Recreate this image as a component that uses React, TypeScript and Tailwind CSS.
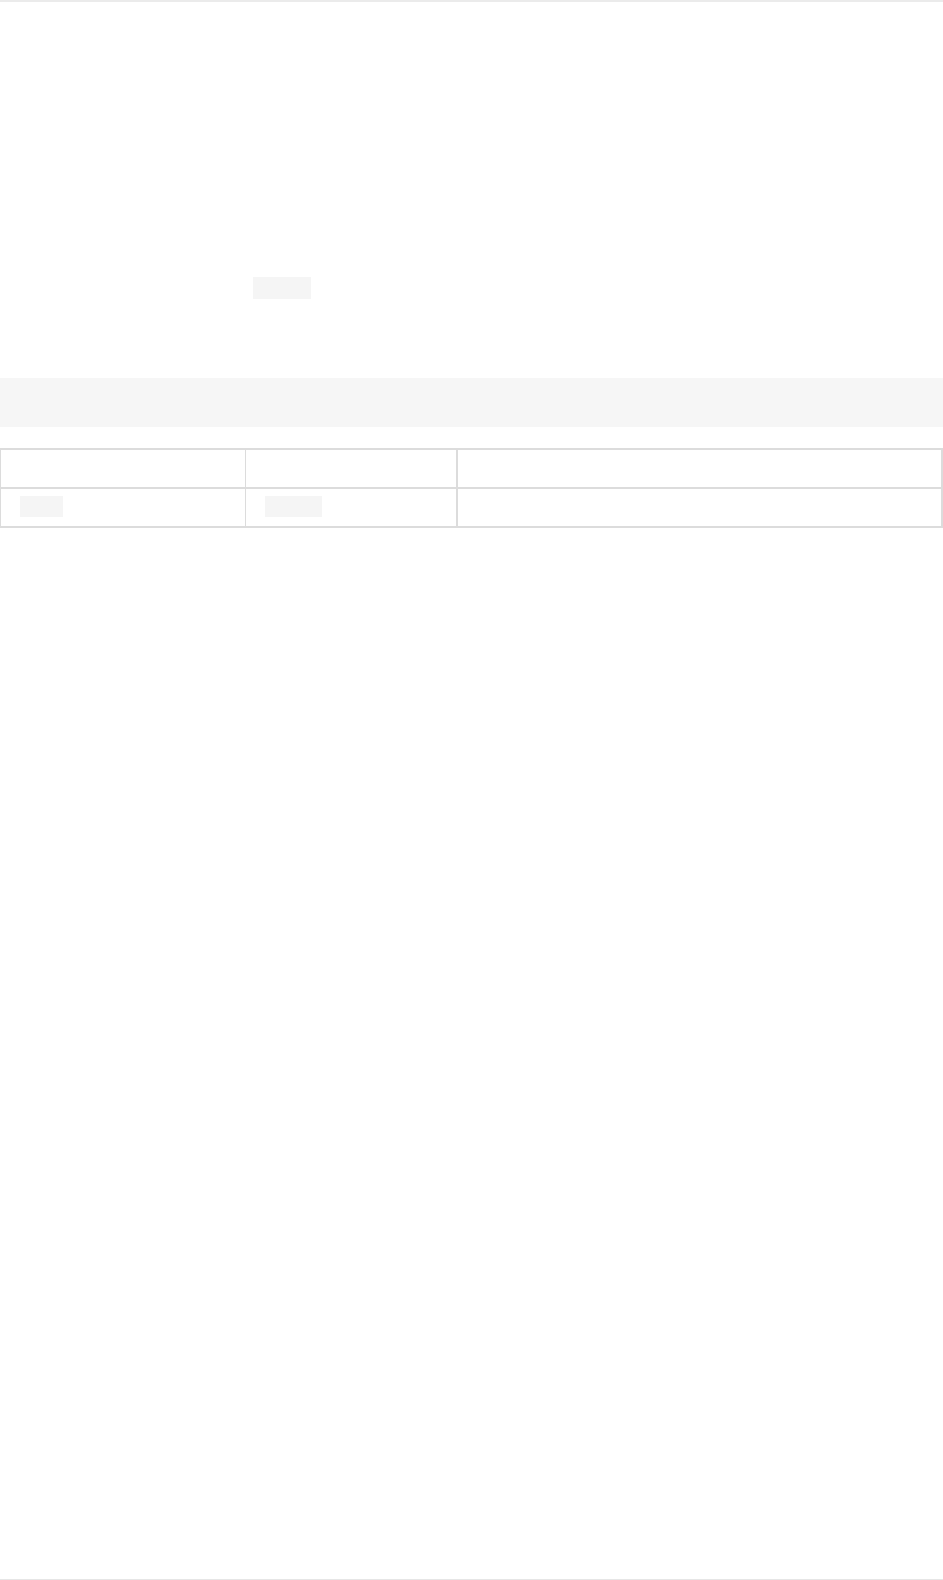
import React from 'react';

function Chip({ w, h }: { w: string; h: string }) {
  return <span className={`block bg-[#f5f5f5] ${w} ${h}`} />;
}

export default function App() {
  return (
    <div className="h-[1580px] w-[943px] bg-white border-t-2 border-b border-t-[#ebebeb] border-b-[#e6e6e6] flex flex-col font-['Liberation_Sans',sans-serif]">
      {/* inline code in the intro paragraph */}
      <div className="mt-[275px] pl-[253px]">
        <span className="block bg-[#f5f5f5] w-[58px] h-[22px]" />
      </div>

      {/* code block */}
      <div className="mt-[79px] h-[49px] w-full bg-[#f6f6f6]" />

      {/* table */}
      <div className="mt-[21px] w-[943px] border-t-2 border-b-2 border-l border-r-2 border-[#dcdcdc]">
        <div className="flex h-[39px] border-b-2 border-[#dcdcdc]">
          <div className="w-[245px] border-r border-[#dcdcdc]" />
          <div className="w-[212px] border-r-2 border-[#dcdcdc]" />
          <div className="flex-1" />
        </div>
        <div className="flex h-[37px]">
          <div className="w-[245px] border-r border-[#dcdcdc] pt-[7px] pl-[19px]">
            <Chip w="w-[43px]" h="h-[21px]" />
          </div>
          <div className="w-[212px] border-r-2 border-[#dcdcdc] pt-[7px] pl-[19px]">
            <Chip w="w-[57px]" h="h-[21px]" />
          </div>
          <div className="flex-1" />
        </div>
      </div>
    </div>
  );
}
